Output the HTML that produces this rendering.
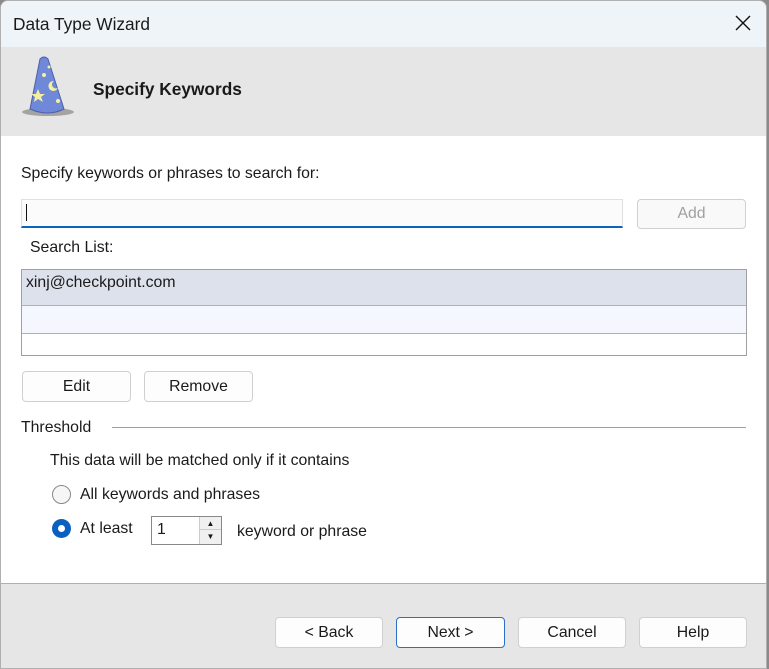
<!DOCTYPE html>
<html><head><style>
*{box-sizing:border-box;margin:0;padding:0}
body{width:769px;height:669px;overflow:hidden;background:#8a8a8a;font-family:"Liberation Sans",sans-serif;font-size:15.8px;color:#1a1a1a;position:relative}
#win{position:absolute;left:0;top:0;width:767px;height:669px;background:#fff;border:1px solid #b0b0b0;border-radius:8px 8px 0 0;overflow:hidden}
.a{position:absolute}
.btn{position:absolute;background:#fdfdfd;border:1px solid #d0d0d0;border-radius:4px;text-align:center;font-size:15.8px;color:#1a1a1a}
</style></head><body><div id="win">
<div class="a" style="left:-1px;top:-1px;width:769px;height:48px;background:#eff4f9"></div>
<div class="a" style="left:12px;top:13px;font-size:17.3px">Data Type Wizard</div>
<svg class="a" style="left:732px;top:12px" width="20" height="20"><path d="M3 3L17 17M17 3L3 17" stroke="#111" stroke-width="1.4"/></svg>
<div class="a" style="left:-1px;top:46px;width:769px;height:89px;background:#e6e6e6"></div>
<svg class="a" style="left:17px;top:54px" width="60" height="65">
<ellipse cx="30" cy="57" rx="26" ry="4" fill="#777" opacity=".6"/>
<path d="M22 4 Q26 0 30 4 L46 54 Q30 62 12 54 Z" fill="#6f88d8" stroke="#4b60a8"/>
<path d="M20 34l2 5 5 0-4 3 2 5-5-3-4 3 1-5-4-3 5 0z" fill="#f4f0a0"/>
<path d="M36 26a5 5 0 1 0 4 7a4 4 0 1 1-4-7z" fill="#f4f0a0"/>
<circle cx="26" cy="20" r="2" fill="#f4f0a0"/><circle cx="40" cy="46" r="2" fill="#f4f0a0"/><circle cx="31" cy="12" r="1.5" fill="#f4f0a0"/>
</svg>
<div class="a" style="left:92px;top:78px;font-weight:bold;font-size:17.3px">Specify Keywords</div>
<div class="a" style="left:20px;top:164px">Specify keywords or phrases to search for:</div>
<div class="a" style="left:20px;top:198px;width:602px;height:29px;background:#fbfbfb;border:1px solid #e0e0e0;border-bottom:2px solid #0a64c0"></div>
<div class="a" style="left:25px;top:203px;width:1px;height:17px;background:#111"></div>
<div class="btn" style="left:636px;top:198px;width:109px;height:30px;line-height:28px;color:#a0a0a0;background:#f9f9f9">Add</div>
<div class="a" style="left:29px;top:238px">Search List:</div>
<div class="a" style="left:20px;top:268px;width:726px;height:87px;border:1px solid #a0a0a0;background:#fff">
<div style="height:36px;background:#dce1ec;border-bottom:1px solid #b0b0b0;padding:4px 4px">xinj@checkpoint.com</div>
<div style="height:28px;background:#f4f7fd;border-bottom:1px solid #b0b0b0"></div>
</div>
<div class="btn" style="left:21px;top:370px;width:109px;height:31px;line-height:29px">Edit</div>
<div class="btn" style="left:143px;top:370px;width:109px;height:31px;line-height:29px">Remove</div>
<div class="a" style="left:20px;top:418px">Threshold</div>
<div class="a" style="left:111px;top:426px;width:634px;height:1px;background:#a0a0a0"></div>
<div class="a" style="left:49px;top:451px">This data will be matched only if it contains</div>
<div class="a" style="left:51px;top:484px;width:19px;height:19px;border:1.5px solid #888;border-radius:50%;background:#f6f6f6"></div>
<div class="a" style="left:79px;top:485px">All keywords and phrases</div>
<div class="a" style="left:51px;top:518px;width:19px;height:19px;border-radius:50%;background:#0a5fc0"><div style="margin:6px;width:7px;height:7px;border-radius:50%;background:#fff"></div></div>
<div class="a" style="left:79px;top:519px">At least</div>
<div class="a" style="left:150px;top:515px;width:71px;height:29px;border:1px solid #888;background:#fff;padding:4px 5px">1</div>
<div class="a" style="left:198px;top:516px;width:22px;height:27px;border-left:1px solid #ccc;background:#f0f0f0">
<div style="height:13px;border-bottom:1px solid #ccc;text-align:center;font-size:8px;line-height:13px">▲</div><div style="text-align:center;font-size:8px;line-height:13px">▼</div></div>
<div class="a" style="left:236px;top:522px">keyword or phrase</div>
<div class="a" style="left:-1px;top:582px;width:769px;height:88px;background:#e6e6e6;border-top:1px solid #b0b0b0"></div>
<div class="btn" style="left:274px;top:616px;width:108px;height:31px;line-height:29px">&lt; Back</div>
<div class="btn" style="left:395px;top:616px;width:109px;height:31px;line-height:29px;border-color:#2a70c8">Next &gt;</div>
<div class="btn" style="left:517px;top:616px;width:108px;height:31px;line-height:29px">Cancel</div>
<div class="btn" style="left:638px;top:616px;width:108px;height:31px;line-height:29px">Help</div>
</div></body></html>
